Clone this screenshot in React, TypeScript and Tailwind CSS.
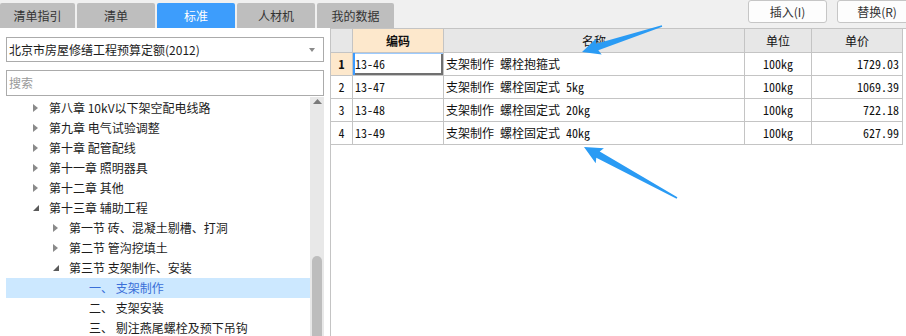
import React from "react";

const tabs = [
  { label: "清单指引", w: "w-[75px]", active: false },
  { label: "清单", w: "w-[78px]", active: false },
  { label: "标准", w: "w-[78px]", active: true },
  { label: "人材机", w: "w-[78px]", active: false },
  { label: "我的数据", w: "w-[77px]", active: false },
];

type TreeItem = { level: 1 | 2 | 3; text: string; state: "closed" | "open" | "leaf"; selected?: boolean };

const tree: TreeItem[] = [
  { level: 1, text: "第八章 10kV以下架空配电线路", state: "closed" },
  { level: 1, text: "第九章 电气试验调整", state: "closed" },
  { level: 1, text: "第十章 配管配线", state: "closed" },
  { level: 1, text: "第十一章 照明器具", state: "closed" },
  { level: 1, text: "第十二章 其他", state: "closed" },
  { level: 1, text: "第十三章 辅助工程", state: "open" },
  { level: 2, text: "第一节 砖、混凝土剔槽、打洞", state: "closed" },
  { level: 2, text: "第二节 管沟挖填土", state: "closed" },
  { level: 2, text: "第三节 支架制作、安装", state: "open" },
  { level: 3, text: "一、 支架制作", state: "leaf", selected: true },
  { level: 3, text: "二、 支架安装", state: "leaf" },
  { level: 3, text: "三、 剔注燕尾螺栓及预下吊钩", state: "leaf" },
];

const rows = [
  { n: "1", code: "13-46", name: "支架制作 螺栓抱箍式", unit: "100kg", price: "1729.03" },
  { n: "2", code: "13-47", name: "支架制作 螺栓固定式 5kg", unit: "100kg", price: "1069.39" },
  { n: "3", code: "13-48", name: "支架制作 螺栓固定式 20kg", unit: "100kg", price: "722.18" },
  { n: "4", code: "13-49", name: "支架制作 螺栓固定式 40kg", unit: "100kg", price: "627.99" },
];

function ClosedIcon() {
  return (
    <svg width="5" height="8" viewBox="0 0 5 8" className="block">
      <polygon points="0,0 5,4 0,8" fill="#8a8a8a" />
    </svg>
  );
}

function OpenIcon() {
  return (
    <svg width="6" height="6" viewBox="0 0 6 6" className="block">
      <polygon points="6,0 6,6 0,6" fill="#5a5a5a" />
    </svg>
  );
}

function TreeRow({ item }: { item: TreeItem }) {
  const iconPad = item.level === 1 ? "pl-[27px]" : "pl-[47px]";
  return (
    <div
      className={
        "h-[20px] flex items-center text-[12px] leading-[20px] whitespace-nowrap " +
        (item.selected ? "bg-[#cce8ff] text-[#3a6fd8]" : "text-[#1c1c1c]")
      }
    >
      {item.level === 3 ? (
        <span className="pl-[83px]">{item.text}</span>
      ) : (
        <>
          <span className={iconPad + " w-auto flex items-center"}>
            <span className="w-[16px] flex items-center">
              {item.state === "open" ? <OpenIcon /> : <ClosedIcon />}
            </span>
          </span>
          <span>{item.text}</span>
        </>
      )}
    </div>
  );
}

export default function App() {
  return (
    <div className="w-[906px] h-[336px] overflow-hidden bg-white relative font-['Noto_Sans_CJK_SC',sans-serif] text-[12px]">
      {/* top bar */}
      <div className="h-[28px] bg-[#f0f0f0] flex">
        <div className="flex gap-[2px] self-end">
          {tabs.map((t) => (
            <div
              key={t.label}
              className={
                t.w +
                " h-[25px] rounded-t-[2px] flex items-center justify-center text-[12px] " +
                (t.active ? "bg-[#3d9dfc] text-white" : "bg-[#bebebe] text-[#333]")
              }
            >
              {t.label}
            </div>
          ))}
        </div>
        <div className="ml-auto flex gap-[10px] self-start mr-[-11px]">
          <div className="w-[79px] h-[23px] bg-[#fdfdfd] border border-[#c6c6c6] rounded-[3px] flex items-center justify-center text-[#333]">
            插入(I)
          </div>
          <div className="w-[80px] h-[23px] bg-[#fdfdfd] border border-[#c6c6c6] rounded-[3px] flex items-center justify-center text-[#333]">
            替换(R)
          </div>
        </div>
      </div>

      <div className="flex h-[308px]">
        {/* left panel */}
        <div className="w-[330px] shrink-0 bg-white flex flex-col">
          <div className="pt-[9px] px-[6px]">
            <div className="h-[25px] border border-[#ababab] flex items-center justify-between pl-[2px] pr-[8px] text-[#1c1c1c]">
              <span>北京市房屋修缮工程预算定额(2012)</span>
              <svg width="6" height="4" viewBox="0 0 6 4" className="block">
                <polygon points="0,0 6,0 3,4" fill="#8a8a8a" />
              </svg>
            </div>
            <div className="mt-[8px] h-[26px] border border-[#ababab] flex items-center pl-[2px] text-[#9a9a9a]">
              搜索
            </div>
          </div>
          <div className="flex flex-1 mt-[1px] pl-[6px] overflow-hidden">
            <div className="w-[304px] pt-[1px]">
              {tree.map((it) => (
                <TreeRow key={it.text} item={it} />
              ))}
            </div>
            <div className="w-[14px] bg-[#e8e8e8] flex flex-col items-center">
              <div className="h-[12px] flex items-center justify-center">
                <svg width="9" height="5" viewBox="0 0 9 5" className="block">
                  <polygon points="0,5 9,5 4.5,0" fill="#7a7a7a" />
                </svg>
              </div>
              <div className="mt-[151px] w-[10px] h-[120px] bg-[#bdbdbd] rounded-t-[5px]" />
            </div>
          </div>
        </div>

        {/* right panel */}
        <div className="flex-1 border-l border-t border-[#c4c4c4] bg-white font-['Noto_Sans_Mono_CJK_SC','Noto_Sans_CJK_SC',monospace] text-[12px] text-[#111]">
          <div className="w-[572px]">
            {/* header */}
            <div className="flex h-[24px] border-b border-[#c4c4c4] bg-[#e7e7e7]">
              <div className="w-[22px] border-r border-[#c4c4c4]" />
              <div className="w-[91px] border-r border-[#c4c4c4] bg-[#fde8cc] flex items-center justify-center font-bold">
                编码
              </div>
              <div className="w-[301px] border-r border-[#c4c4c4] flex items-center justify-center">名称</div>
              <div className="w-[67px] border-r border-[#c4c4c4] flex items-center justify-center">单位</div>
              <div className="w-[91px] border-r border-[#c4c4c4] flex items-center justify-center">单价</div>
            </div>
            {rows.map((r, i) => (
              <div key={r.n} className="flex h-[23px] border-b border-[#c4c4c4]">
                <div
                  className={
                    "w-[22px] border-r border-[#c4c4c4] flex items-center justify-center " +
                    (i === 0 ? "bg-[#fde8cc] font-bold" : "")
                  }
                >
                  {r.n}
                </div>
                <div
                  className={
                    "w-[91px] border-r border-[#c4c4c4] flex items-center pl-[2px] " +
                    (i === 0
                      ? "shadow-[inset_2px_0_0_#3c9bff,inset_0_1px_0_#9ccbff,inset_-2px_-2px_0_#707070]"
                      : "")
                  }
                >
                  {r.code}
                </div>
                <div className="w-[301px] border-r border-[#c4c4c4] flex items-center pl-[2px] whitespace-nowrap">
                  {r.name}
                </div>
                <div className="w-[67px] border-r border-[#c4c4c4] flex items-center justify-center">{r.unit}</div>
                <div className="w-[91px] border-r border-[#c4c4c4] flex items-center justify-end pr-[3px]">
                  {r.price}
                </div>
              </div>
            ))}
          </div>
        </div>
      </div>

      {/* annotation arrows */}
      <svg className="absolute left-0 top-0 pointer-events-none" width="906" height="336" viewBox="0 0 906 336">
        <polygon
          points="661.8,25.2 596.1,43.7 596.5,38.3 582,52 601.7,54.5 598.3,50.3 662.2,26.8"
          fill="#2a9bf4"
        />
        <polygon
          points="677.4,197.3 599.7,151.6 603.9,148.2 584,147 595.7,163.2 596.3,157.8 676.6,198.7"
          fill="#2a9bf4"
        />
      </svg>
    </div>
  );
}
